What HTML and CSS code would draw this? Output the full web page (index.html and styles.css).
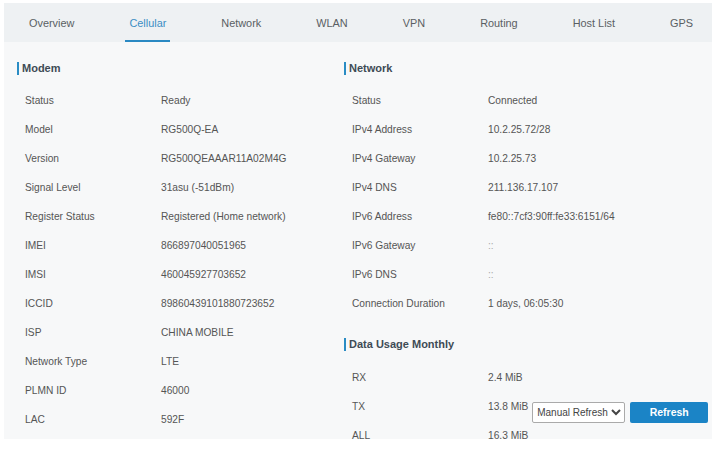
FILE: index.html
```html
<!DOCTYPE html>
<html lang="en">
<head>
    <meta charset="UTF-8">
    <meta name="viewport" content="width=device-width, initial-scale=1.0">
    <title>Cellular Status</title>
    <link rel="stylesheet" href="styles.css">
</head>
<body>
    <div class="panel">
        <!-- top navigation tabs -->
        <div class="tabs">
            <span class="tab">Overview</span>
            <span class="tab active">Cellular</span>
            <span class="tab">Network</span>
            <span class="tab">WLAN</span>
            <span class="tab">VPN</span>
            <span class="tab">Routing</span>
            <span class="tab">Host List</span>
            <span class="tab">GPS</span>
        </div>

        <div class="content">
            <div class="column">
                <div class="section-title">Modem</div>
                <div class="row"><span class="label">Status</span><span class="value">Ready</span></div>
                <div class="row"><span class="label">Model</span><span class="value">RG500Q-EA</span></div>
                <div class="row"><span class="label">Version</span><span class="value">RG500QEAAAR11A02M4G</span></div>
                <div class="row"><span class="label">Signal Level</span><span class="value">31asu (-51dBm)</span></div>
                <div class="row"><span class="label">Register Status</span><span class="value">Registered (Home network)</span></div>
                <div class="row"><span class="label">IMEI</span><span class="value">866897040051965</span></div>
                <div class="row"><span class="label">IMSI</span><span class="value">460045927703652</span></div>
                <div class="row"><span class="label">ICCID</span><span class="value">89860439101880723652</span></div>
                <div class="row"><span class="label">ISP</span><span class="value">CHINA MOBILE</span></div>
                <div class="row"><span class="label">Network Type</span><span class="value">LTE</span></div>
                <div class="row"><span class="label">PLMN ID</span><span class="value">46000</span></div>
                <div class="row"><span class="label">LAC</span><span class="value">592F</span></div>
            </div>

            <div class="column">
                <div class="section-title">Network</div>
                <div class="row"><span class="label">Status</span><span class="value">Connected</span></div>
                <div class="row"><span class="label">IPv4 Address</span><span class="value">10.2.25.72/28</span></div>
                <div class="row"><span class="label">IPv4 Gateway</span><span class="value">10.2.25.73</span></div>
                <div class="row"><span class="label">IPv4 DNS</span><span class="value">211.136.17.107</span></div>
                <div class="row"><span class="label">IPv6 Address</span><span class="value">fe80::7cf3:90ff:fe33:6151/64</span></div>
                <div class="row"><span class="label">IPv6 Gateway</span><span class="value faint">::</span></div>
                <div class="row"><span class="label">IPv6 DNS</span><span class="value faint">::</span></div>
                <div class="row"><span class="label">Connection Duration</span><span class="value">1 days, 06:05:30</span></div>

                <div class="section-title spaced">Data Usage Monthly</div>
                <div class="row"><span class="label">RX</span><span class="value">2.4 MiB</span></div>
                <div class="row">
                    <span class="label">TX</span>
                    <span class="value with-controls">
                        13.8 MiB
                        <span class="controls">
                            <select class="refresh-select">
                                <option>Manual Refresh</option>
                            </select>
                            <button class="refresh-btn">Refresh</button>
                        </span>
                    </span>
                </div>
                <div class="row"><span class="label">ALL</span><span class="value">16.3 MiB</span></div>
            </div>
        </div>
    </div>
</body>
</html>
```

FILE: styles.css
```css
/* Basic styling */
body {
    margin: 0;
    padding: 3px 8px 0 4px;
    background-color: #fff;
    font-family: "Liberation Sans", Arial, sans-serif;
    color: #555;
}

.panel {
    width: 708px;
    height: 436px;
    background-color: #f7f8f9;
    overflow: hidden;
}

/* tabs */
.tabs {
    display: flex;
    gap: 47px;
    height: 39px;
    padding-left: 21px;
    background-color: #eef1f3;
}

.tab {
    display: flex;
    align-items: center;
    padding: 0 4px;
    padding-top: 2px;
    font-size: 10.9px;
    color: #5a5f63;
    border-bottom: 2px solid transparent;
    box-sizing: border-box;
}

.tab.active {
    color: #3b8ec4;
    border-bottom-color: #2a89c3;
}

/* two columns of info */
.content {
    display: grid;
    grid-template-columns: 327px 1fr;
    padding: 18px 0 0 13px;
}

.section-title {
    display: flex;
    align-items: center;
    gap: 3px;
    height: 16px;
    margin-bottom: 10px;
    font-size: 11px;
    font-weight: bold;
    color: #3e4b55;
}

.section-title::before {
    content: "";
    width: 2px;
    height: 13px;
    background-color: #2a8cc4;
}

.section-title.spaced {
    margin-top: 18px;
    margin-bottom: 11px;
}

.row {
    display: flex;
    align-items: center;
    height: 29px;
    font-size: 10.2px;
}

.label {
    width: 136px;
    padding-left: 8px;
    flex-shrink: 0;
}

.value {
    color: #555;
}

.value.faint {
    color: #aaa;
}

.with-controls {
    display: flex;
    align-items: center;
    gap: 4px;
}

.controls {
    display: flex;
    gap: 5px;
    margin-top: 11px;
}

.refresh-select {
    width: 93px;
    height: 21px;
    font-family: "Liberation Sans", Arial, sans-serif;
    font-size: 10px;
    color: #444;
    background-color: #fff;
    border: 1px solid #aaa;
    border-radius: 2px;
    padding: 0;
}

.refresh-btn {
    width: 78px;
    height: 21px;
    border: none;
    border-radius: 2px;
    background-color: #1b84c6;
    color: #fff;
    font-family: "Liberation Sans", Arial, sans-serif;
    font-size: 10.5px;
    font-weight: bold;
}
```
